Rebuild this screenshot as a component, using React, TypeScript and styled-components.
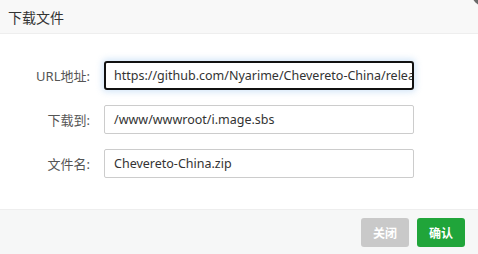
import React from 'react';
import styled, { createGlobalStyle } from 'styled-components';

const GlobalStyle = createGlobalStyle`
  html, body {
    margin: 0;
    padding: 0;
    background: #ffffff;
  }
  body {
    font-family: 'Noto Sans', 'Noto Sans CJK SC', sans-serif;
    overflow: hidden;
  }
`;

const Dialog = styled.div`
  position: relative;
  width: 478px;
  height: 254px;
  display: flex;
  flex-direction: column;
  background: #fff;
  overflow: hidden;
`;

const Header = styled.div`
  height: 33px;
  flex: none;
  display: flex;
  align-items: center;
  padding-left: 8px;
  background: #f8f8f8;
  border-bottom: 1px solid #eeeeee;
  font-size: 14px;
  color: #333;
  font-family: 'Noto Sans CJK SC', sans-serif;
`;

const CloseDot = styled.div`
  position: absolute;
  right: -24px;
  top: -24px;
  width: 31px;
  height: 31px;
  border-radius: 50%;
  background: #6b6b6b;
`;

const Body = styled.div`
  flex: 1;
  display: flex;
  flex-direction: column;
  gap: 15px;
  padding: 27px 0 0 0;
`;

const Row = styled.div`
  display: flex;
  align-items: center;
`;

const Label = styled.label`
  width: 90px;
  text-align: right;
  padding-right: 14px;
  font-size: 13px;
  color: #555;
  font-family: 'Noto Sans', 'Noto Sans CJK SC', sans-serif;
`;

const Field = styled.div<{ $focus?: boolean }>`
  box-sizing: border-box;
  width: 310px;
  height: 29px;
  display: flex;
  align-items: center;
  padding: 0 ${(p) => (p.$focus ? 8 : 9)}px;
  border: ${(p) => (p.$focus ? '2px solid #111' : '1px solid #cccccc')};
  border-radius: ${(p) => (p.$focus ? 3 : 2)}px;
  box-shadow: ${(p) => (p.$focus ? '0 0 6px 2px rgba(160, 200, 240, 0.45)' : 'none')};
  font-size: 12.5px;
  color: #333;
  white-space: nowrap;
  overflow: hidden;
`;

const Caret = styled.span`
  display: inline-block;
  width: 1px;
  height: 15px;
  background: #111;
  vertical-align: middle;
`;

const Footer = styled.div`
  height: 44px;
  flex: none;
  display: flex;
  justify-content: flex-end;
  align-items: center;
  gap: 8px;
  padding-right: 13px;
  background: #f6f7f7;
  border-top: 1px solid #eeeeee;
`;

const Button = styled.button<{ $primary?: boolean }>`
  width: 48px;
  height: 29px;
  border: none;
  border-radius: 3px;
  background: ${(p) => (p.$primary ? '#20a53a' : '#c9c9c9')};
  color: #fff;
  font-size: 12px;
  font-weight: bold;
  font-family: 'Noto Sans CJK SC', sans-serif;
  padding: 0;
  cursor: pointer;
`;

const App: React.FC = () => {
  return (
    <>
      <GlobalStyle />
      <Dialog>
        <Header>下载文件</Header>
        <CloseDot />
        <Body>
          <Row>
            <Label>URL地址:</Label>
            <Field $focus>
              https://githu<Caret />b.com/Nyarime/Chevereto-China/releases/download/v1.2/Chevereto-China.zip
            </Field>
          </Row>
          <Row>
            <Label>下载到:</Label>
            <Field>/www/wwwroot/i.mage.sbs</Field>
          </Row>
          <Row>
            <Label>文件名:</Label>
            <Field>Chevereto-China.zip</Field>
          </Row>
        </Body>
        <Footer>
          <Button>关闭</Button>
          <Button $primary>确认</Button>
        </Footer>
      </Dialog>
    </>
  );
};

export default App;
